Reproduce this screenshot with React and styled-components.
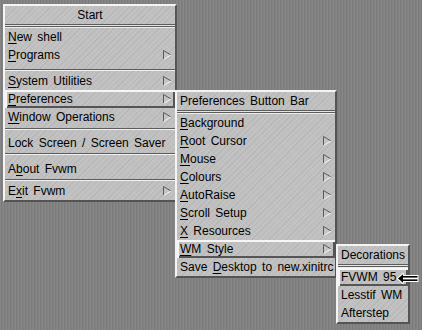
import React from "react";
import styled, { createGlobalStyle } from "styled-components";

const GlobalStyle = createGlobalStyle`
  html, body { margin: 0; padding: 0; background: #808080; }
  * { box-sizing: border-box; }
`;

const Desktop = styled.div`
  position: relative;
  width: 422px;
  height: 330px;
  overflow: hidden;
  background-color: #808080;
  background-image: repeating-linear-gradient(
    90deg,
    #878787 0 1px,
    #7b7b7b 1px 2px,
    #828282 2px 3px
  );
  font-family: "Liberation Sans", Arial, Helvetica, sans-serif;
  font-size: 12px;
  color: #000;
`;

const MenuWindow = styled.div`
  position: absolute;
  left: ${(p) => p.$x}px;
  top: ${(p) => p.$y}px;
  width: ${(p) => p.$w}px;
  z-index: ${(p) => p.$z};
  display: flex;
  flex-direction: column;
  border-style: solid;
  border-width: 2px;
  border-color: #f4f4f4 #545454 #545454 #f4f4f4;
  background-color: #c0c0c0;
  background-image:
    repeating-linear-gradient(45deg, rgba(255, 255, 255, 0.07) 0 1px, transparent 1px 3px),
    repeating-linear-gradient(-45deg, rgba(0, 0, 0, 0.05) 0 1px, transparent 1px 4px);
`;

const Title = styled.div`
  height: 18px;
  line-height: 18px;
  text-align: center;
  white-space: nowrap;
  word-spacing: 2px;
`;

const DoubleSep = styled.div`
  height: 4px;
  background: linear-gradient(
    to bottom,
    #5c5c5c 0 1px,
    #e4e4e4 1px 2px,
    #5c5c5c 2px 3px,
    #ececec 3px 4px
  );
`;

const Sep = styled.div`
  height: 2px;
  margin: ${(p) => p.$top}px 0 ${(p) => p.$bottom}px;
  background: linear-gradient(to bottom, #5c5c5c 0 1px, #f0f0f0 1px 2px);
`;

const Item = styled.div`
  height: 18px;
  display: flex;
  align-items: center;
  justify-content: space-between;
  padding: 0 3px;
  white-space: nowrap;
  word-spacing: 2px;
  box-shadow: ${(p) =>
    p.$active ? "inset 2px 2px 0 #f6f6f6, inset -2px -2px 0 #555555" : "none"};
`;

const Label = styled.span`
  line-height: 18px;
`;

const Key = styled.span`
  text-decoration: underline;
  text-underline-offset: 2px;
  text-decoration-thickness: 1px;
`;

const ArrowIcon = styled.svg`
  flex: none;
  width: 9px;
  height: 10px;
  margin-left: 8px;
`;

const Cursor = styled.svg`
  position: absolute;
  left: 396px;
  top: 272px;
  z-index: 10;
`;

const Arrow = () => (
  <ArrowIcon viewBox="0 0 9 10">
    <polygon points="0.5,0.5 8,5 0.5,9.5" fill="#c4c4c4" />
    <line x1="0.5" y1="0.5" x2="0.5" y2="9.5" stroke="#5a5a5a" strokeWidth="1" />
    <line x1="0.5" y1="0.5" x2="8" y2="5" stroke="#5a5a5a" strokeWidth="1" />
    <line x1="0.5" y1="9.5" x2="8" y2="5" stroke="#f4f4f4" strokeWidth="1" />
  </ArrowIcon>
);

const Entry = ({ pre = "", k = "", post = "", sub, active }) => (
  <Item $active={active}>
    <Label>
      {pre}
      {k && <Key>{k}</Key>}
      {post}
    </Label>
    {sub && <Arrow />}
  </Item>
);

export default function App() {
  return (
    <>
      <GlobalStyle />
      <Desktop>
        <MenuWindow $x={3} $y={4} $w={174} $z={1}>
          <Title>Start</Title>
          <DoubleSep />
          <Entry k="N" post="ew shell" />
          <Entry k="P" post="rograms" sub />
          <Sep $top={5} $bottom={1} />
          <Entry k="S" post="ystem Utilities" sub />
          <Entry k="P" post="references" sub active />
          <Entry k="W" post="indow Operations" sub />
          <Sep $top={2} $bottom={4} />
          <Entry pre="Lock Screen / Screen Saver" />
          <Sep $top={1} $bottom={5} />
          <Entry pre="A" k="b" post="out Fvwm" />
          <Sep $top={1} $bottom={1} />
          <Entry pre="E" k="x" post="it Fvwm" sub />
        </MenuWindow>

        <MenuWindow $x={175} $y={90} $w={162} $z={2}>
          <Entry pre="Preferences Button Bar" />
          <DoubleSep />
          <Entry k="B" post="ackground" />
          <Entry k="R" post="oot Cursor" sub />
          <Entry k="M" post="ouse" sub />
          <Entry k="C" post="olours" sub />
          <Entry k="A" post="utoRaise" sub />
          <Entry k="S" post="croll Setup" sub />
          <Entry k="X" post=" Resources" sub />
          <Entry k="W" post="M Style" sub active />
          <Entry pre="Save " k="D" post="esktop to new.xinitrc" />
        </MenuWindow>

        <MenuWindow $x={336} $y={244} $w={74} $z={3}>
          <Title>Decorations</Title>
          <DoubleSep />
          <Entry pre="FVWM 95" active />
          <Entry pre="Lesstif WM" />
          <Entry pre="Afterstep" />
        </MenuWindow>

        <Cursor width="23" height="13" viewBox="0 0 23 13">
          <path
            d="M0.5 6.5 L7.5 0.5 L7.5 3 L22.5 3 L22.5 10 L7.5 10 L7.5 12.5 Z"
            fill="#ffffff"
          />
          <path d="M2 6.5 L7 2.2 L7 10.8 Z" fill="#000" />
          <rect x="7" y="4" width="14.5" height="1.6" fill="#000" />
          <rect x="7" y="7.4" width="14.5" height="1.6" fill="#000" />
        </Cursor>
      </Desktop>
    </>
  );
}
